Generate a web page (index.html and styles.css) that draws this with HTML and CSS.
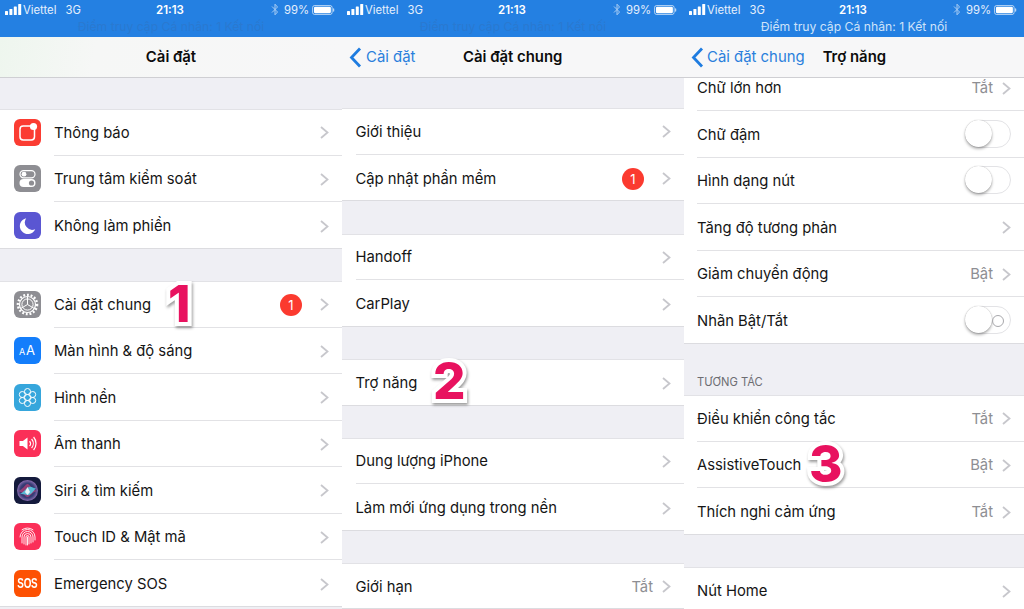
FILE: index.html
```html
<!DOCTYPE html>
<html lang="vi">
<head>
<meta charset="utf-8">
<title>Cài đặt</title>
<link rel="stylesheet" href="styles.css">
</head>
<body>
<svg class="defs" width="0" height="0">
  <defs>
    <symbol id="chev" viewBox="0 0 9 13"><polyline points="1,1 7.5,6.5 1,12" fill="none" stroke="#c7c7cc" stroke-width="1.8"/></symbol>
    <symbol id="back" viewBox="0 0 13 21"><polyline points="11,1.5 2.5,10.5 11,19.5" fill="none" stroke="#1f7ce0" stroke-width="2.8"/></symbol>
    <symbol id="status-left" viewBox="0 0 18 11"><rect x="0" y="7" width="3" height="4" rx=".6" fill="#fff"/><rect x="4.4" y="5" width="3" height="6" rx=".6" fill="#fff"/><rect x="8.8" y="2.5" width="3" height="8.5" rx=".6" fill="#fff"/><rect x="13.2" y="0" width="3" height="11" rx=".6" fill="#fff"/></symbol>
    <symbol id="bt" viewBox="0 0 8 13"><polyline points="1,3.5 6.5,9 4,11.8 4,1.2 6.5,4 1,9.5" fill="none" stroke="#a9cdf4" stroke-width="1"/></symbol>
    <symbol id="batt" viewBox="0 0 25 11"><rect x=".5" y=".5" width="21.5" height="10" rx="2.4" fill="none" stroke="#fff" stroke-opacity=".7"/><rect x="2" y="2" width="18.6" height="7" rx="1.2" fill="#fff"/><rect x="23" y="3.7" width="1.3" height="3.6" rx=".6" fill="#fff" fill-opacity=".7"/></symbol>
  </defs>
</svg>
<main class="screens">

  <section class="phone">
    <div class="status">
      <div class="status-row">
        <span class="st-left"><svg class="ic-sig"><use href="#status-left"/></svg>Viettel<span class="net">3G</span></span>
        <span class="st-time">21:13</span>
        <span class="st-right"><svg class="ic-bt"><use href="#bt"/></svg>99%<svg class="ic-batt"><use href="#batt"/></svg></span>
      </div>
      <div class="hotspot">Điểm truy cập Cá nhân: 1 Kết nối</div>
    </div>
    <header class="nav nav-green"><h1 class="nav-title">Cài đặt</h1></header>
    <div class="content p1">
      <ul class="group">
        <li class="row icon-row">
          <svg class="app" viewBox="0 0 27 27"><rect width="27" height="27" rx="6" fill="#fb3c32"/><rect x="6" y="7" width="14.5" height="14" rx="3.2" fill="none" stroke="#fff" stroke-width="1.5"/><circle cx="19.5" cy="7.5" r="3.6" fill="#fff"/></svg>
          <div class="cell"><span class="label">Thông báo</span><svg class="chev"><use href="#chev"/></svg></div>
        </li>
        <li class="row icon-row">
          <svg class="app" viewBox="0 0 27 27"><rect width="27" height="27" rx="6" fill="#8e8e93"/><rect x="6" y="5.6" width="15" height="7.2" rx="3.6" fill="none" stroke="#fff" stroke-width="1.2"/><circle cx="10" cy="9.2" r="2.4" fill="#fff"/><rect x="5.5" y="14" width="16" height="8" rx="4" fill="#fff"/><circle cx="17.5" cy="18" r="2.6" fill="#8e8e93"/></svg>
          <div class="cell"><span class="label">Trung tâm kiểm soát</span><svg class="chev"><use href="#chev"/></svg></div>
        </li>
        <li class="row icon-row">
          <svg class="app" viewBox="0 0 27 27"><rect width="27" height="27" rx="6" fill="#5a56d2"/><path d="M12.2 6.200a8 8 0 1 0 9 11 7.400 7.400 0 0 1-9-11z" fill="#fff"/></svg>
          <div class="cell"><span class="label">Không làm phiền</span><svg class="chev"><use href="#chev"/></svg></div>
        </li>
      </ul>
      <ul class="group g2">
        <li class="row icon-row">
          <svg class="app" viewBox="0 0 27 27"><rect width="27" height="27" rx="6" fill="#8e8e93"/><circle cx="13.5" cy="13.5" r="9.6" fill="none" stroke="#fff" stroke-width="2.4" stroke-dasharray="1.9 1.8"/><circle cx="13.5" cy="13.5" r="8" fill="none" stroke="#fff" stroke-width="1.2"/><circle cx="13.5" cy="13.5" r="5.6" fill="none" stroke="#fff" stroke-width="1"/><path d="M13.5 13.5V6M13.5 13.5L7 17.3M13.5 13.5L20 17.3" stroke="#fff" stroke-width="1"/></svg>
          <div class="cell"><span class="label">Cài đặt chung</span><span class="badge">1</span><svg class="chev"><use href="#chev"/></svg></div>
        </li>
        <li class="row icon-row">
          <div class="app app-aa"><span class="aa-s">A</span><span class="aa-l">A</span></div>
          <div class="cell"><span class="label">Màn hình &amp; độ sáng</span><svg class="chev"><use href="#chev"/></svg></div>
        </li>
        <li class="row icon-row">
          <svg class="app" viewBox="0 0 27 27"><rect width="27" height="27" rx="6" fill="#36a6dc"/><g fill="none" stroke="#fff" stroke-width="1"><circle cx="13.5" cy="13.5" r="3"/><circle cx="13.500" cy="7.500" r="3"/><circle cx="13.500" cy="19.500" r="3"/><circle cx="8.300" cy="10.500" r="3"/><circle cx="18.700" cy="10.500" r="3"/><circle cx="8.300" cy="16.500" r="3"/><circle cx="18.700" cy="16.500" r="3"/></g></svg>
          <div class="cell"><span class="label">Hình nền</span><svg class="chev"><use href="#chev"/></svg></div>
        </li>
        <li class="row icon-row">
          <svg class="app" viewBox="0 0 27 27"><rect width="27" height="27" rx="6" fill="#fb2f58"/><path d="M5.5 11h3.400l4.600-3.600v12.200l-4.600-3.600H5.500z" fill="#fff"/><g fill="none" stroke="#fff" stroke-width="1.2"><path d="M15.600 11a4 4 0 0 1 0 5"/><path d="M17.600 9a7 7 0 0 1 0 9"/><path d="M19.600 7a10 10 0 0 1 0 13"/></g></svg>
          <div class="cell"><span class="label">Âm thanh</span><svg class="chev"><use href="#chev"/></svg></div>
        </li>
        <li class="row icon-row">
          <svg class="app" viewBox="0 0 27 27"><defs><radialGradient id="siri-g"><stop offset="0" stop-color="#1b2350"/><stop offset=".7" stop-color="#3a3f78"/><stop offset="1" stop-color="#8a6db0"/></radialGradient></defs><rect width="27" height="27" rx="6" fill="#141a3c"/><circle cx="13.5" cy="13.5" r="10.500" fill="url(#siri-g)"/><path d="M4 14C9 13 11 7 13.500 7S18 13 23 14C18 15 16 20 13.500 20S9 15 4 14z" fill="#d8467e" fill-opacity=".6"/><path d="M6 17C10 15 12 11 15 10S20 12 22 11C19 15 16 19 13 18S9 17 6 17z" fill="#4fd0e6" fill-opacity=".85"/><path d="M11 15l2.500-5 2.500 5-2.500 3z" fill="#fff" fill-opacity=".85"/></svg>
          <div class="cell"><span class="label">Siri &amp; tìm kiếm</span><svg class="chev"><use href="#chev"/></svg></div>
        </li>
        <li class="row icon-row">
          <svg class="app" viewBox="0 0 27 27"><rect width="27" height="27" rx="6" fill="#fb2f58"/><g fill="none" stroke="#fff" stroke-width=".9" stroke-linecap="round"><path d="M6 14a7.500 7.500 0 0 1 15 0v3"/><path d="M8 20v-6a5.500 5.500 0 0 1 11 0v5"/><path d="M10 21v-7a3.500 3.500 0 0 1 7 0v6"/><path d="M12 22v-8a1.500 1.500 0 0 1 3 0v7"/><path d="M13.500 14v8"/><path d="M8 6.800a9 9 0 0 1 11 0"/></g></svg>
          <div class="cell"><span class="label">Touch ID &amp; Mật mã</span><svg class="chev"><use href="#chev"/></svg></div>
        </li>
        <li class="row icon-row">
          <div class="app app-sos"><span class="sos-text">SOS</span></div>
          <div class="cell"><span class="label">Emergency SOS</span><svg class="chev"><use href="#chev"/></svg></div>
        </li>
      </ul>
    </div>
    <span class="step step-1">1</span>
  </section>

  <section class="phone">
    <div class="status">
      <div class="status-row">
        <span class="st-left"><svg class="ic-sig"><use href="#status-left"/></svg>Viettel<span class="net">3G</span></span>
        <span class="st-time">21:13</span>
        <span class="st-right"><svg class="ic-bt"><use href="#bt"/></svg>99%<svg class="ic-batt"><use href="#batt"/></svg></span>
      </div>
      <div class="hotspot">Điểm truy cập Cá nhân: 1 Kết nối</div>
    </div>
    <header class="nav">
      <a class="back"><svg class="ic-back"><use href="#back"/></svg>Cài đặt</a>
      <h1 class="nav-title">Cài đặt chung</h1>
    </header>
    <div class="content p2">
      <ul class="group">
        <li class="row"><div class="cell"><span class="label">Giới thiệu</span><svg class="chev"><use href="#chev"/></svg></div></li>
        <li class="row"><div class="cell"><span class="label">Cập nhật phần mềm</span><span class="badge">1</span><svg class="chev"><use href="#chev"/></svg></div></li>
      </ul>
      <ul class="group g2">
        <li class="row"><div class="cell"><span class="label">Handoff</span><svg class="chev"><use href="#chev"/></svg></div></li>
        <li class="row"><div class="cell"><span class="label">CarPlay</span><svg class="chev"><use href="#chev"/></svg></div></li>
      </ul>
      <ul class="group g2">
        <li class="row"><div class="cell"><span class="label">Trợ năng</span><svg class="chev"><use href="#chev"/></svg></div></li>
      </ul>
      <ul class="group g3">
        <li class="row"><div class="cell"><span class="label">Dung lượng iPhone</span><svg class="chev"><use href="#chev"/></svg></div></li>
        <li class="row"><div class="cell"><span class="label">Làm mới ứng dụng trong nền</span><svg class="chev"><use href="#chev"/></svg></div></li>
      </ul>
      <ul class="group g3">
        <li class="row"><div class="cell"><span class="label">Giới hạn</span><span class="value">Tắt</span><svg class="chev"><use href="#chev"/></svg></div></li>
      </ul>
    </div>
    <span class="step step-2">2</span>
  </section>

  <section class="phone phone-last">
    <div class="status">
      <div class="status-row">
        <span class="st-left"><svg class="ic-sig"><use href="#status-left"/></svg>Viettel<span class="net">3G</span></span>
        <span class="st-time">21:13</span>
        <span class="st-right"><svg class="ic-bt"><use href="#bt"/></svg>99%<svg class="ic-batt"><use href="#batt"/></svg></span>
      </div>
      <div class="hotspot hotspot-on">Điểm truy cập Cá nhân: 1 Kết nối</div>
    </div>
    <header class="nav">
      <a class="back"><svg class="ic-back"><use href="#back"/></svg>Cài đặt chung</a>
      <h1 class="nav-title">Trợ năng</h1>
    </header>
    <div class="content p3">
      <ul class="group scrolled">
        <li class="row"><div class="cell"><span class="label">Chữ lớn hơn</span><span class="value">Tắt</span><svg class="chev"><use href="#chev"/></svg></div></li>
        <li class="row"><div class="cell"><span class="label">Chữ đậm</span><span class="toggle"></span></div></li>
        <li class="row"><div class="cell"><span class="label">Hình dạng nút</span><span class="toggle"></span></div></li>
        <li class="row"><div class="cell"><span class="label">Tăng độ tương phản</span><svg class="chev"><use href="#chev"/></svg></div></li>
        <li class="row"><div class="cell"><span class="label">Giảm chuyển động</span><span class="value">Bật</span><svg class="chev"><use href="#chev"/></svg></div></li>
        <li class="row"><div class="cell"><span class="label">Nhãn Bật/Tắt</span><span class="toggle toggle-o"></span></div></li>
      </ul>
      <h2 class="group-title">TƯƠNG TÁC</h2>
      <ul class="group">
        <li class="row"><div class="cell"><span class="label">Điều khiển công tắc</span><span class="value">Tắt</span><svg class="chev"><use href="#chev"/></svg></div></li>
        <li class="row"><div class="cell"><span class="label">AssistiveTouch</span><span class="value">Bật</span><svg class="chev"><use href="#chev"/></svg></div></li>
        <li class="row"><div class="cell"><span class="label">Thích nghi cảm ứng</span><span class="value">Tắt</span><svg class="chev"><use href="#chev"/></svg></div></li>
      </ul>
      <ul class="group g2">
        <li class="row"><div class="cell"><span class="label">Nút Home</span><svg class="chev"><use href="#chev"/></svg></div></li>
      </ul>
    </div>
    <span class="step step-3">3</span>
  </section>

</main>
</body>
</html>
```
FILE: styles.css
```css
* { box-sizing: border-box; margin: 0; padding: 0; }
html, body { width: 1024px; height: 609px; overflow: hidden; background: #efeff4; }
body { font-family: Inter, "Liberation Sans", sans-serif; color: #111; }
.defs { display: block; height: 0; }
ul { list-style: none; }

.screens { display: grid; grid-template-columns: 342px 342px 340px; height: 609px; }
.phone { position: relative; height: 609px; overflow: hidden; display: flex; flex-direction: column; background: #efeff4; }

.status { height: 37px; flex: none; background: #2480e2; color: #fff; position: relative; z-index: 2; }
.status-row { height: 18px; padding: 1px 7px 0 5px; display: grid; grid-template-columns: 1fr auto 1fr; align-items: center; font-size: 11.3px; }
.st-left { display: flex; align-items: center; color: #e4effc; }
.net { margin-left: 9px; }
.ic-sig { width: 18px; height: 11px; }
.st-time { font-weight: 600; font-size: 11.5px; }
.st-right { display: flex; justify-content: flex-end; align-items: center; color: #e4effc; }
.ic-bt { width: 8px; height: 13px; margin-right: 5px; }
.ic-batt { width: 23px; height: 10px; margin-left: 3px; }
.hotspot { text-align: center; font-size: 12.2px; line-height: 18px; color: #2a79d0; }
.hotspot-on { color: #cfe3f9; }

.nav { height: 41px; flex: none; background: #f7f7f8; border-bottom: 1px solid #cfcfd3; position: relative; z-index: 2; display: flex; align-items: center; }
.nav-green { background: linear-gradient(100deg, #eef6ee 0%, #f6f7f6 28%, #f7f7f8 100%); justify-content: center; }
.nav-title { font-size: 14.9px; font-weight: 600; color: #0c0c0c; }
.back { display: flex; align-items: center; font-size: 14.9px; color: #2a7fdc; padding-left: 7px; width: 121px; }
.ic-back { width: 13px; height: 21px; margin-right: 4px; flex: none; }
.phone-last .back { width: auto; padding-right: 18px; }
.phone-last .ic-back { margin-right: 3px; }

.content { flex: 1; min-height: 0; }
.p1 { padding-top: 31px; }
.p2 { padding-top: 30px; }
.group { background: #fff; box-shadow: inset 0 1px #e2e2e6, inset 0 -1px #dcdce0; }
.g2 { margin-top: 32.5px; }
.g3 { margin-top: 32px; }
.scrolled { margin-top: -13.5px; }

.row { height: 46.5px; display: flex; align-items: stretch; padding-left: 13.5px; }
.phone-last .row { padding-left: 13px; }
.row:last-child .cell { border-bottom: 0; }
.cell { flex: 1; min-width: 0; display: flex; align-items: center; border-bottom: 1px solid #e2e2e5; padding: 2px 13px 0 0; }
.label { flex: 1; font-size: 14.8px; color: #151515; white-space: nowrap; }
.app { width: 27px; height: 27px; flex: none; align-self: center; margin-right: 13.5px; display: block; }
.chev { width: 9px; height: 13px; flex: none; display: block; }
.value { font-size: 14.8px; color: #8e8e93; margin-right: 9px; }
.badge { width: 22px; height: 22px; border-radius: 50%; background: #fb3a2f; color: #fff; font-size: 13px; display: flex; align-items: center; justify-content: center; margin-right: 18px; flex: none; }

.app-aa { background: #147efb; border-radius: 6px; color: #fff; display: flex; align-items: baseline; justify-content: center; gap: 1px; line-height: 27px; }
.aa-s { font-size: 9px; }
.aa-l { font-size: 13px; }
.app-sos { background: #fd5103; border-radius: 6px; color: #fff; font-family: "Liberation Sans", sans-serif; font-weight: 700; font-size: 12px; line-height: 27px; text-align: center; overflow: hidden; }
.sos-text { display: inline-block; transform: scale(.82, 1.25); letter-spacing: -.2px; }

.toggle { width: 46px; height: 28px; border: 1px solid #e3e3e6; border-radius: 14px; position: relative; flex: none; background: #fff; margin-top: -2px; }
.toggle::before { content: ""; position: absolute; left: -1px; top: -1px; width: 27px; height: 27px; border-radius: 50%; background: #fff; box-shadow: 0 2px 3px rgba(0,0,0,.3), 0 0 1px rgba(0,0,0,.3); }
.toggle-o::after { content: ""; position: absolute; right: 6px; top: 8px; width: 10px; height: 10px; border-radius: 50%; border: 1px solid #a8a8ac; }

.group-title { font-size: 11.2px; font-weight: 400; color: #6d6d72; height: 51.5px; padding: 31px 0 0 13px; line-height: 14px; }

.step { position: absolute; z-index: 3; font-family: Inter, "Liberation Sans", sans-serif; font-weight: 800; font-size: 51px; line-height: 1; color: #e8125f; -webkit-text-stroke: 8px #fff; paint-order: stroke fill; filter: drop-shadow(1px 2px 1.5px rgba(0,0,0,.4)); }
.step-1 { left: 168px; top: 278px; }
.step-2 { left: 91px; top: 355px; }
.step-3 { left: 125px; top: 438px; }
```
